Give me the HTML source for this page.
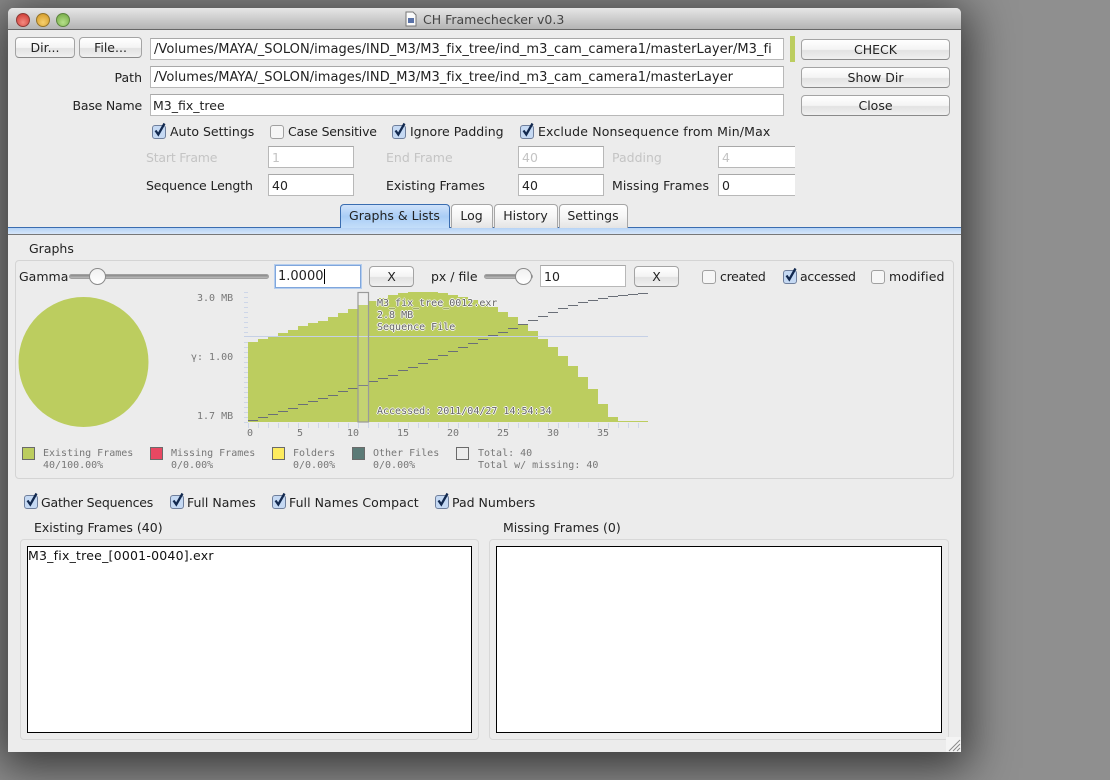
<!DOCTYPE html>
<html><head><meta charset="utf-8"><style>
html,body{margin:0;padding:0}
body{width:1110px;height:780px;overflow:hidden;position:relative;background:#8f8f8f;font-family:"DejaVu Sans","Liberation Sans",sans-serif;font-size:12.5px;color:#222}
#win{position:absolute;left:8px;top:8px;width:953px;height:744px;background:#ececec;border-radius:5px 5px 0 0;box-shadow:0 8px 45px 8px rgba(0,0,0,.62)}
#bar{position:absolute;left:8px;top:8px;width:953px;height:21px;border-radius:5px 5px 0 0;background:linear-gradient(#e6e6e6,#b4b4b4);border-bottom:1px solid #666}
.a{position:absolute}
.t{position:absolute;white-space:nowrap;line-height:16px}
.r{text-align:right}
.d{color:#c4c4c4}
.f{position:absolute;background:#fff;border:1px solid #b8b8b8;border-top-color:#a8a8a8;box-sizing:border-box;line-height:22px;padding-left:3px;white-space:nowrap;overflow:hidden}
.p{font-size:13px;letter-spacing:.04px}
.b{position:absolute;box-sizing:border-box;background:linear-gradient(#fff,#f4f4f4 50%,#e2e2e2 55%,#f0f0f0);border:1px solid #a4a4a4;border-bottom-color:#8a8a8a;border-radius:4px;text-align:center;line-height:19px}
.tab{position:absolute;top:204px;height:24px;box-sizing:border-box;border:1px solid #a6a6a6;border-bottom:0;border-radius:4px 4px 0 0;background:linear-gradient(#fff,#f5f5f5 50%,#e4e4e4);text-align:center;line-height:21px;padding-right:1px}
.m{position:absolute;white-space:pre;font-family:"DejaVu Sans Mono","Liberation Mono",monospace;font-size:10px;line-height:12px;color:#777}
.o{color:#666;text-shadow:1px 0 #f6f6f6,-1px 0 #f6f6f6,0 1px #f6f6f6,0 -1px #f6f6f6}
.c{position:absolute;width:16px;height:17px}
.tr{position:absolute;height:5px;border-radius:3px;background:linear-gradient(#888,#bbb);border:1px solid #a0a0a0;box-sizing:border-box}
.k{position:absolute;width:17px;height:17px;border-radius:50%;box-sizing:border-box;border:1px solid #8a8a8a;background:linear-gradient(#f0f0f0,#fff)}
</style></head><body>
<svg width="0" height="0" style="position:absolute"><defs>
<symbol id="on" viewBox="0 0 16 17"><rect x="1.5" y="3.5" width="13" height="13" rx="2.5" fill="#c5d9f3" stroke="#6f7f9c"/><path d="M4.5 8.5 L7.3 12.5 L13.5 1.5" fill="none" stroke="#12294f" stroke-width="2.3"/></symbol>
<symbol id="off" viewBox="0 0 16 17"><rect x="1.5" y="3.5" width="13" height="13" rx="2.5" fill="#f6f6f6" stroke="#a0a0a0"/></symbol>
</defs></svg>
<div id="win"></div>
<div id="bar"></div>
<div class="a" style="left:16px;top:13px;width:12px;height:12px;border-radius:50%;background:radial-gradient(circle at 50% 70%,#f48a80,#c9302a);border:.5px solid #8c3a36"></div>
<div class="a" style="left:36px;top:13px;width:12px;height:12px;border-radius:50%;background:radial-gradient(circle at 50% 70%,#f7d06e,#cf9420);border:.5px solid #94742a"></div>
<div class="a" style="left:56px;top:13px;width:12px;height:12px;border-radius:50%;background:radial-gradient(circle at 50% 70%,#b6e08a,#6ea53e);border:.5px solid #5d8440"></div>
<svg class="a" style="left:405px;top:11px" width="12" height="16"><path d="M1 1H8L11 4V15H1Z" fill="#fafafa" stroke="#777"/><rect x="3" y="7" width="6" height="5" fill="#5a72a8"/></svg>
<div class="t" style="left:423px;top:12px;color:#444;font-size:12.5px">CH Framechecker v0.3</div>

<div class="b" style="left:15px;top:37px;width:60px;height:21px">Dir...</div>
<div class="b" style="left:79px;top:37px;width:63px;height:21px">File...</div>
<div class="f p" style="left:150px;top:38px;width:634px;height:22px">/Volumes/MAYA/_SOLON/images/IND_M3/M3_fix_tree/ind_m3_cam_camera1/masterLayer/M3_fi</div>
<div class="a" style="left:790px;top:36px;width:5px;height:26px;background:#bccd5f"></div>
<div class="b" style="left:801px;top:39px;width:149px;height:21px">CHECK</div>
<div class="t r" style="left:60px;top:70px;width:82px">Path</div>
<div class="f p" style="left:150px;top:66px;width:634px;height:22px">/Volumes/MAYA/_SOLON/images/IND_M3/M3_fix_tree/ind_m3_cam_camera1/masterLayer</div>
<div class="b" style="left:801px;top:67px;width:149px;height:21px">Show Dir</div>
<div class="t r" style="left:50px;top:98px;width:92px;letter-spacing:-.2px">Base Name</div>
<div class="f" style="left:150px;top:94px;width:634px;height:22px;padding-left:2px">M3_fix_tree</div>
<div class="b" style="left:801px;top:95px;width:149px;height:21px">Close</div>

<svg class="c" style="left:151px;top:122px"><use href="#on"/></svg><div class="t" style="left:170px;top:124px">Auto Settings</div>
<svg class="c" style="left:269px;top:122px"><use href="#off"/></svg><div class="t" style="left:288px;top:124px;letter-spacing:-.2px">Case Sensitive</div>
<svg class="c" style="left:391px;top:122px"><use href="#on"/></svg><div class="t" style="left:410px;top:124px">Ignore Padding</div>
<svg class="c" style="left:519px;top:122px"><use href="#on"/></svg><div class="t" style="left:538px;top:124px;letter-spacing:.16px">Exclude Nonsequence from Min/Max</div>

<div class="t d" style="left:146px;top:150px;letter-spacing:-.2px">Start Frame</div>
<div class="f d" style="left:268px;top:146px;width:86px;height:22px">1</div>
<div class="t d" style="left:386px;top:150px">End Frame</div>
<div class="f d" style="left:518px;top:146px;width:86px;height:22px">40</div>
<div class="t d" style="left:612px;top:150px">Padding</div>
<div class="f d" style="left:718px;top:146px;width:77px;height:22px;border-right:0">4</div>
<div class="t" style="left:146px;top:178px;letter-spacing:-.13px">Sequence Length</div>
<div class="f" style="left:268px;top:174px;width:86px;height:22px">40</div>
<div class="t" style="left:386px;top:178px">Existing Frames</div>
<div class="f" style="left:518px;top:174px;width:86px;height:22px">40</div>
<div class="t" style="left:612px;top:178px;letter-spacing:.07px">Missing Frames</div>
<div class="f" style="left:718px;top:174px;width:77px;height:22px;border-right:0">0</div>

<div class="a" style="left:8px;top:227px;width:953px;height:8px;box-sizing:border-box;background:linear-gradient(#b5d3f5,#d6e6f9);border-top:1px solid #3a6db0;border-bottom:1px solid #777"></div>
<div class="tab" style="left:340px;width:110px;height:24px;background:linear-gradient(#cfe2fa,#a9cdf6 50%,#c4def9);border-color:#3a6db0">Graphs &amp; Lists</div>
<div class="tab" style="left:451px;width:42px">Log</div>
<div class="tab" style="left:494px;width:64px">History</div>
<div class="tab" style="left:559px;width:69px">Settings</div>

<div class="t" style="left:29px;top:241px">Graphs</div>
<div class="a" style="left:15px;top:260px;width:939px;height:219px;box-sizing:border-box;border:1px solid #d4d4d4;border-radius:4px"></div>
<div class="t" style="left:19px;top:269px">Gamma</div>
<div class="tr" style="left:69px;top:274px;width:200px"></div>
<div class="k" style="left:89px;top:268px"></div>
<div class="f" style="left:275px;top:265px;width:86px;height:23px;border:1px solid #7fa6dc;box-shadow:0 0 0 1px #b4cdee;padding-left:2px;line-height:21px;font-size:13px">1.0000<span style="border-left:1px solid #000;margin-left:0"></span></div>
<div class="b" style="left:369px;top:266px;width:45px;height:21px">X</div>
<div class="t" style="left:431px;top:269px">px / file</div>
<div class="tr" style="left:484px;top:274px;width:49px"></div>
<div class="k" style="left:515px;top:268px"></div>
<div class="f" style="left:540px;top:265px;width:86px;height:22px;line-height:21px">10</div>
<div class="b" style="left:634px;top:266px;width:45px;height:21px">X</div>
<svg class="c" style="left:701px;top:267px"><use href="#off"/></svg><div class="t" style="left:720px;top:269px;letter-spacing:-.3px">created</div>
<svg class="c" style="left:782px;top:267px"><use href="#on"/></svg><div class="t" style="left:800px;top:269px;letter-spacing:-.25px">accessed</div>
<svg class="c" style="left:870px;top:267px"><use href="#off"/></svg><div class="t" style="left:889px;top:269px;letter-spacing:.1px">modified</div>

<svg class="a" style="left:0;top:0" width="1110" height="780">
<circle cx="83.5" cy="362" r="65" fill="#bccd5f"/>
<path fill="#bccd5f" d="M248 422V342H258V339H268V337H278V333H288V330H298V326H308V323H318V321H328V317H338V313H348V309H358V305H368V301H378V298H388V295H398V293H408V292H438V293H448V295H458V297H468V300H478V304H488V307H498V312H508V317H518V324H528V331H538V339H548V347H558V356H568V366H578V377H588V389H598V404H608V417H618V421H648V422Z"/>
<path stroke="#c5d0e6" stroke-width="1" d="M244 336.5H648"/>
<path stroke="#cdd6e8" stroke-width="1" d="M244 292.5h4M244 297.5h4M244 302.5h4M244 307.5h4M244 312.5h4M244 317.5h4M244 322.5h4M244 327.5h4M244 332.5h4M244 342.5h4M244 347.5h4M244 352.5h4M244 357.5h4M244 362.5h4M244 367.5h4M244 372.5h4M244 377.5h4M244 382.5h4M244 387.5h4M244 392.5h4M244 397.5h4M244 402.5h4M244 407.5h4M244 412.5h4M244 417.5h4M244 422.5h4
M248.5 423v5M258.5 423v5M268.5 423v5M278.5 423v5M288.5 423v5M298.5 423v5M308.5 423v5M318.5 423v5M328.5 423v5M338.5 423v5M348.5 423v5M358.5 423v5M368.5 423v5M378.5 423v5M388.5 423v5M398.5 423v5M408.5 423v5M418.5 423v5M428.5 423v5M438.5 423v5M448.5 423v5M458.5 423v5M468.5 423v5M478.5 423v5M488.5 423v5M498.5 423v5M508.5 423v5M518.5 423v5M528.5 423v5M538.5 423v5M548.5 423v5M558.5 423v5M568.5 423v5M578.5 423v5M588.5 423v5M598.5 423v5M608.5 423v5M618.5 423v5M628.5 423v5M638.5 423v5"/>
<path stroke="#6a6f78" stroke-width="1" fill="none" d="M248 420.5h10M258 417.5h10M268 414.5h10M278 411.5h10M288 408.5h10M298 404.5h10M308 401.5h10M318 398.5h10M328 395.5h10M338 391.5h10M348 388.5h10M358 385.5h10M368 381.5h10M378 378.5h10M388 375.5h10M398 370.5h10M408 367.5h10M418 363.5h10M428 359.5h10M438 355.5h10M448 351.5h10M458 347.5h10M468 343.5h10M478 339.5h10M488 335.5h10M498 332.5h10M508 328.5h10M518 324.5h10M528 320.5h10M538 316.5h10M548 312.5h10M558 308.5h10M568 305.5h10M578 302.5h10M588 300.5h10M598 298.5h10M608 296.5h10M618 295.5h10M628 294.5h10M638 293.5h10"/>
<rect x="358" y="292.5" width="10.5" height="129.5" fill="#fff" fill-opacity=".12" stroke="#9a9a9a" stroke-width="1.2"/>
<rect x="22.5" y="447.5" width="12" height="12" fill="#bccd5f" stroke="#6a6a6a"/>
<rect x="150.5" y="447.5" width="12" height="12" fill="#e84862" stroke="#6a6a6a"/>
<rect x="272.5" y="447.5" width="12" height="12" fill="#fdeb5f" stroke="#6a6a6a"/>
<rect x="352.5" y="447.5" width="12" height="12" fill="#5b7a76" stroke="#6a6a6a"/>
<rect x="456.5" y="447.5" width="12" height="12" fill="#ececec" stroke="#6a6a6a"/>
</svg>

<div class="m" style="left:197px;top:293px">3.0 MB</div>
<div class="m" style="left:191px;top:352px">&#947;: 1.00</div>
<div class="m" style="left:197px;top:411px">1.7 MB</div>
<div class="m" style="left:247px;top:428px">0</div>
<div class="m" style="left:297px;top:428px">5</div>
<div class="m" style="left:347px;top:428px">10</div>
<div class="m" style="left:397px;top:428px">15</div>
<div class="m" style="left:447px;top:428px">20</div>
<div class="m" style="left:497px;top:428px">25</div>
<div class="m" style="left:547px;top:428px">30</div>
<div class="m" style="left:597px;top:428px">35</div>
<div class="m o" style="left:377px;top:298px">M3_fix_tree_0012.exr
2.8 MB
Sequence File</div>
<div class="m o" style="left:377px;top:406px">Accessed: 2011/04/27 14:54:34</div>

<div class="m" style="left:43px;top:448px">Existing Frames
40/100.00%</div>
<div class="m" style="left:171px;top:448px">Missing Frames
0/0.00%</div>
<div class="m" style="left:293px;top:448px">Folders
0/0.00%</div>
<div class="m" style="left:373px;top:448px">Other Files
0/0.00%</div>
<div class="m" style="left:478px;top:448px">Total: 40
Total w/ missing: 40</div>

<svg class="c" style="left:23px;top:492px"><use href="#on"/></svg><div class="t" style="left:41px;top:495px;letter-spacing:-.19px">Gather Sequences</div>
<svg class="c" style="left:169px;top:492px"><use href="#on"/></svg><div class="t" style="left:187px;top:495px">Full Names</div>
<svg class="c" style="left:271px;top:492px"><use href="#on"/></svg><div class="t" style="left:289px;top:495px;letter-spacing:.06px">Full Names Compact</div>
<svg class="c" style="left:434px;top:492px"><use href="#on"/></svg><div class="t" style="left:452px;top:495px">Pad Numbers</div>

<div class="t" style="left:34px;top:520px">Existing Frames (40)</div>
<div class="t" style="left:503px;top:520px">Missing Frames (0)</div>
<div class="a" style="left:20px;top:539px;width:459px;height:201px;box-sizing:border-box;border:1px solid #d8d8d8;border-radius:4px"></div>
<div class="a" style="left:489px;top:539px;width:460px;height:201px;box-sizing:border-box;border:1px solid #d8d8d8;border-radius:4px"></div>
<div class="a" style="left:27px;top:546px;width:445px;height:187px;box-sizing:border-box;background:#fff;border:1px solid #000"></div>
<div class="a" style="left:496px;top:546px;width:446px;height:187px;box-sizing:border-box;background:#fff;border:1px solid #000"></div>
<div class="t" style="left:28px;top:548px;color:#111;letter-spacing:.22px">M3_fix_tree_[0001-0040].exr</div>

<div class="a" style="left:946px;top:737px;width:15px;height:15px;background:#f4f4f4"></div>
<svg class="a" style="left:948px;top:739px" width="13" height="13"><path d="M1 12L12 1M5 12L12 5M9 12L12 9" stroke="#8a8a8a" stroke-width="1" fill="none"/></svg>
</body></html>
